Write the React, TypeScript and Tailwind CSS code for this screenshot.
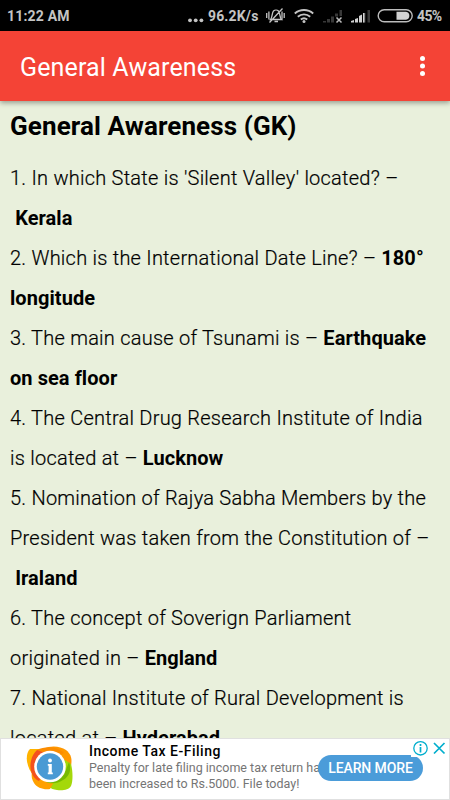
type Line = { text: string; answer?: string };

// Each entry is one rendered line of the question list
const lines: Line[] = [
  { text: "1. In which State is 'Silent Valley' located? –" },
  { text: "\u00a0", answer: "Kerala" },
  { text: "2. Which is the International Date Line? – ", answer: "180°" },
  { text: "", answer: "longitude" },
  { text: "3. The main cause of Tsunami is – ", answer: "Earthquake" },
  { text: "", answer: "on sea floor" },
  { text: "4. The Central Drug Research Institute of India" },
  { text: "is located at – ", answer: "Lucknow" },
  { text: "5. Nomination of Rajya Sabha Members by the" },
  { text: "President was taken from the Constitution of –" },
  { text: "\u00a0", answer: "Iraland" },
  { text: "6. The concept of Soverign Parliament" },
  { text: "originated in – ", answer: "England" },
  { text: "7. National Institute of Rural Development is" },
  { text: "located at – ", answer: "Hyderabad" },
];

function StatusIcons() {
  return (
    <svg width="150" height="31" viewBox="0 0 150 31" fill="none" aria-hidden="true">
      {/* Vibrate / muted bell */}
      <g stroke="#c4c4c4" strokeWidth="1.3">
        <path d="M4.5 19.500c2-1.800 1.200-6.500 3-8.500 1.300-1.200 3.700-1.200 5 0 1.800 2 1 6.700 3 8.500zM8.500 21.500h3.500M16.500 8.500L3.500 22.500" />
        <path d="M0.700 13v5M2.900 11.500v8M16 11.500v8M18.200 13v5" />
      </g>
      {/* Wifi */}
      <g stroke="#c4c4c4" strokeWidth="1.900">
        <path d="M28.800 13.500a14 14 0 0 1 18.400 0M31.800 16.700a9.500 9.500 0 0 1 12.400 0M34.800 19.500a5 5 0 0 1 6.400 0" />
      </g>
      <circle cx="38" cy="21.500" r="1.500" fill="#c4c4c4" />
      {/* Signal 1, no service */}
      <g fill="#383838">
        <path d="M57 21h3v1.500h-3zM61 19h3v3.500h-3zM65 16.500h3v6h-3zM69 13.500h3v3h-3zM73.500 10h2.500v6h-2.500z" />
      </g>
      <path d="M70.500 17.500l5 5M75.500 17.500l-5 5" stroke="#bdbdbd" strokeWidth="1.500" />
      {/* Signal 2 */}
      <path d="M85 21l3-1v2.500h-3zM89 19l3-1v4.500h-3zM93 16l3-1.500v8h-3z" fill="#d0d0d0" />
      <path d="M97 13h2.500v9.500H97zM101.500 10h2.500v12.500h-2.500z" fill="#3a3a3a" />
      <path d="M97 13h1.500v9.500H97z" fill="#d0d0d0" />
      {/* Battery */}
      <rect x="112.200" y="9.700" width="34" height="12" rx="6" stroke="#bcbcbc" strokeWidth="1.400" />
      <path d="M130.500 11.800h9.500a4 4 0 0 1 0 7.900h-9.500z" fill="#d2d2d2" />
    </svg>
  );
}

function StatusBar() {
  return (
    <div className="flex h-[31px] shrink-0 items-center bg-black pl-[7px] text-[14px] font-bold leading-[31px] text-[#c4c4c4]">
      <span className="w-[181px] pt-[2px] tracking-[0.2px]">11:22 AM</span>
      <svg width="16" height="31" className="mr-[4px]" fill="#c4c4c4" aria-hidden="true">
        <circle cx="2" cy="20.300" r="1.900" />
        <circle cx="7.700" cy="20.300" r="1.900" />
        <circle cx="13.400" cy="20.300" r="1.900" />
      </svg>
      <span className="w-[58px] whitespace-nowrap pt-[2px] tracking-[0.15px]">96.2K/s</span>
      <StatusIcons />
      <span className="ml-px pt-[2px] text-[14px] tracking-[-0.6px]">45%</span>
    </div>
  );
}

function AppBar() {
  return (
    <header className="relative z-10 flex h-[70px] shrink-0 items-center justify-between bg-[#f44336] pl-5 pr-[25px] shadow-[0_2px_5px_rgba(0,0,0,0.35)]">
      <h1 className="pt-[4px] text-[25px] leading-[30px] tracking-[0.14px] text-white">General Awareness</h1>
      <svg width="5" height="22" fill="#fff" aria-label="More options">
        <circle cx="2.500" cy="3.500" r="2.500" />
        <circle cx="2.500" cy="11" r="2.500" />
        <circle cx="2.500" cy="18.500" r="2.500" />
      </svg>
    </header>
  );
}

function AdIcon() {
  return (
    <svg width="48" height="46" viewBox="0 0 48 46" className="shrink-0" aria-hidden="true">
      <path d="M5 3h20l-6 32-10-5C2 23-1 9 5 3z" fill="#ffb300" />
      <path d="M18 3c8-4 17-3 23 1 6 5 6 10 5 16L30 30z" fill="#ff9800" />
      <path d="M40 14l6 4c2 8 2 17 0 22-2 4-9 5-14 4-7-1-10-4-12-8z" fill="#a4d80a" />
      <path d="M7 26l22 10-4 7c-6 1-13-1-16-6-2-3-3-7-2-11z" fill="#ffa000" />
      <path d="M12 4l22 0-20 31C7 32 4 23 6 15c1-5 3-8 6-11z" fill="#f4511e" />
      <path d="M12 4c8-4 20-4 27 3l-8 4z" fill="#fb8c00" />
      <path d="M39 29l5-13c3 8 0 15-6 18-6 4-12 4-17 2z" fill="#76b900" />
      <circle cx="25" cy="20.500" r="15.800" fill="#fff" />
      <circle cx="25" cy="20.500" r="13.200" fill="#4a9ad4" />
      <circle cx="25" cy="14.500" r="1.900" fill="#fff" />
      <path d="M22.800 18h4v8.500h1v1.700h-5v-1.700h.8v-6.700h-.8z" fill="#fff" />
    </svg>
  );
}

function AdBanner() {
  return (
    <aside className="relative flex h-[62px] shrink-0 border border-[#e0e0e0] bg-white pl-[24px] pt-[7px]">
      <AdIcon />
      <div className="ml-[16px] -mt-[3px] whitespace-nowrap">
        <div className="text-[14px] font-medium leading-[17px] tracking-[0.500px] text-black">Income Tax E-Filing</div>
        <div className="text-[12.500px] leading-[16px] text-[#757575]">
          <div>Penalty for late filing income tax return has</div>
          <div>been increased to Rs.5000. File today!</div>
        </div>
      </div>
      <button className="absolute left-[317px] top-[16px] h-[26px] w-[105px] rounded-full bg-[#4b9cd9] text-[14px] font-medium tracking-[-0.1px] text-white">
        LEARN MORE
      </button>
      <div className="absolute right-0 top-0 flex h-[18px] w-[38px] items-center bg-white">
        <svg width="38" height="18" viewBox="0 0 38 18" fill="none" stroke="#00aecd" aria-hidden="true">
          <circle cx="9.500" cy="9.300" r="6.700" strokeWidth="1.300" />
          <path d="M9.500 8v5.500M9.500 5v2" strokeWidth="1.700" />
          <path d="M23 4l10.500 10.500M33.500 4L23 14.500" strokeWidth="1.700" />
        </svg>
      </div>
    </aside>
  );
}

export default function App() {
  return (
    <div className="flex h-[800px] w-[450px] flex-col overflow-hidden bg-[#e9f0dc] font-['Roboto',sans-serif]">
      <StatusBar />
      <AppBar />
      <main className="min-h-0 flex-1 overflow-hidden pl-[10px] text-black">
        <h2 className="pt-[10px] text-[26px] font-bold leading-[30px] tracking-[0.1px]">General Awareness (GK)</h2>
        <div className="mt-[17px] text-[20px] font-light leading-[40px] tracking-[0.24px]">
          {lines.map((line, i) => (
            <div key={i} className="whitespace-pre">
              <span className="[-webkit-text-stroke:0.2px_#000]">{line.text}</span>
              {line.answer && <b className="font-bold tracking-[0.06px]">{line.answer}</b>}
            </div>
          ))}
        </div>
      </main>
      <AdBanner />
    </div>
  );
}
